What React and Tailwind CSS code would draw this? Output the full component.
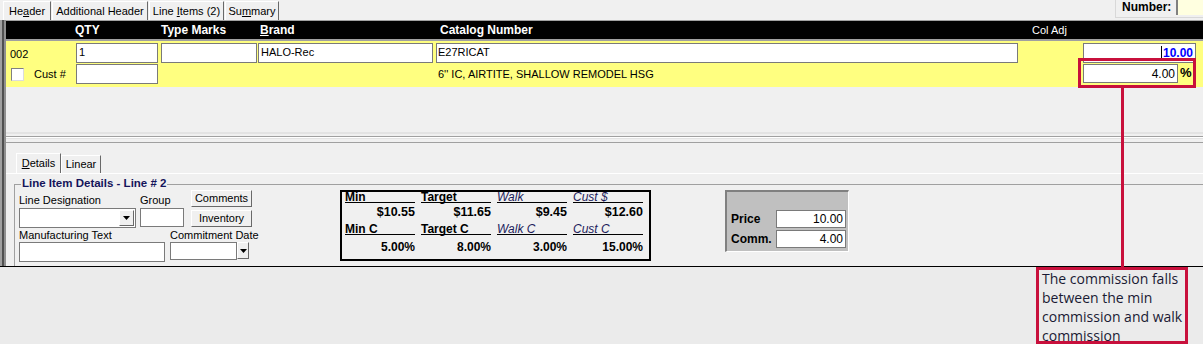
import React from "react";

function TopTab({ w, children }) {
  return (
    <div
      className={`${w} h-[19px] border-t border-l border-white border-r border-r-[#696969] text-[11px] leading-[18px] text-black text-center`}
    >
      {children}
    </div>
  );
}

function Arrow() {
  return (
    <svg width="7" height="4" viewBox="0 0 7 4">
      <path d="M0 0h7L3.5 4z" fill="#000" />
    </svg>
  );
}

function DropBtn({ cls }) {
  return (
    <div
      className={`${cls} shrink-0 flex items-center justify-center bg-[#f0f0f0] border-t border-l border-white border-r border-b border-r-[#696969] border-b-[#696969]`}
    >
      <Arrow />
    </div>
  );
}

function Btn({ children }) {
  return (
    <div className="h-[17px] w-[61px] flex items-center justify-center bg-[#f0f0f0] border-t border-l border-white border-r border-b border-r-[#696969] border-b-[#696969] text-[11px] leading-none">
      {children}
    </div>
  );
}

function StatHead({ children, italic }) {
  return (
    <div
      className={`h-[11px] leading-[10px] border-b border-black text-[12px] ${
        italic ? "italic font-normal text-[#1c1c5c]" : "font-bold text-black"
      }`}
    >
      {children}
    </div>
  );
}

export default function App() {
  const inp = "bg-white border border-[#7a7a7a]";
  return (
    <div className="relative w-[1203px] h-[344px] overflow-hidden bg-[#ebebeb] font-['Liberation_Sans',Arial,sans-serif] text-black">
      {/* top tabs */}
      <div className="h-[20px] bg-[#f0f0f0] flex items-start">
        <div className="flex pl-[3px] pt-[1px] gap-[1px]">
          <TopTab w="w-[48px]">
            He<u>a</u>der
          </TopTab>
          <TopTab w="w-[96px]">Additional Header</TopTab>
          <TopTab w="w-[75px]">
            Line <u>I</u>tems (2)
          </TopTab>
          <TopTab w="w-[54px]">
            Su<u>m</u>mary
          </TopTab>
        </div>
        <div className="ml-auto w-[88px] h-[18px] flex items-start border-l border-b border-l-[#d8d8d8] border-b-[#d8d8d8]">
          <div className="pl-[6px] w-[60px] text-[12px] font-bold leading-[14px]">Number:</div>
          <div className="flex-1 h-[15px] bg-[#ffffe0] border-l-2 border-l-[#808080]"></div>
        </div>
      </div>

      {/* main window */}
      <div className="h-[247px] flex border-b border-black">
        <div className="w-[6px] flex">
          <div className="w-[2px] bg-[#a0a0a0]"></div>
          <div className="w-[2px] bg-[#505050]"></div>
          <div className="w-[2px] bg-[#909090]"></div>
        </div>
        <div className="flex-1 flex flex-col bg-[#f0f0f0]">
          <div className="h-[1px] bg-[#a0a0a0]"></div>
          {/* black header */}
          <div className="h-[18px] bg-black flex items-center text-white text-[12px] leading-none font-bold">
            <div className="w-[69px]"></div>
            <div className="w-[82px]">QTY</div>
            <div className="w-[96px] ml-[4px]">Type Marks</div>
            <div className="w-[175px] ml-[1px] pl-[2px]">
              <u>B</u>rand
            </div>
            <div className="w-[582px] ml-[3px] pl-[4px]">Catalog Number</div>
            <div className="ml-[14px] font-normal text-[11px]">Col Adj</div>
          </div>
          <div className="h-[2px] bg-[#a0a0a0]"></div>
          {/* yellow rows */}
          <div className="bg-[#ffff80] pt-[2px] pb-[3px] flex flex-col gap-[1px]">
            <div className="flex h-[20px] text-[11px]">
              <div className="w-[70px] pl-[4px] flex items-center pt-[3px]">002</div>
              <div className={`${inp} w-[82px] pl-[2px] leading-[17px]`}>1</div>
              <div className={`${inp} w-[96px] ml-[3px]`}></div>
              <div className={`${inp} w-[175px] ml-[1px] pl-[2px] leading-[17px]`}>HALO-Rec</div>
              <div className={`${inp} w-[582px] ml-[3px] pl-[1px] leading-[17px]`}>E27RICAT</div>
              <div className="flex-1"></div>
              <div className={`${inp} w-[113px] mr-[7px] flex items-center justify-end pr-[2px] text-[12px] font-bold text-[#0000ff]`}>
                <span className="w-[1px] h-[14px] bg-black mr-[1px]"></span>10.00
              </div>
            </div>
            <div className="flex h-[20px] text-[11px]">
              <div className="w-[70px] shrink-0 flex items-center">
                <div className="ml-[5px] w-[13px] h-[13px] bg-white border border-t-[#808080] border-l-[#808080] border-r-[#dcdcdc] border-b-[#dcdcdc]"></div>
                <div className="ml-[10px]">Cust #</div>
              </div>
              <div className={`${inp} w-[82px] shrink-0`}></div>
              <div className="ml-[280px] flex items-center whitespace-nowrap pt-[1px]">
                6'' IC, AIRTITE, SHALLOW REMODEL HSG
              </div>
              <div className="flex-1"></div>
              <div className={`${inp} w-[95px] h-[19px] shrink-0 flex items-center justify-end pr-[2px] text-[12px]`}>4.00</div>
              <div className="w-[18px] shrink-0 mr-[7px] pl-[2px] text-[13px] font-bold leading-[18px]">%</div>
            </div>
          </div>
          {/* empty grey area */}
          <div className="h-[45px]"></div>
          {/* splitter */}
          <div className="h-[11px] flex flex-col">
            <div className="h-[2px] bg-[#e3e3e3]"></div>
            <div className="h-[2px]"></div>
            <div className="h-[1px] bg-[#a0a0a0]"></div>
            <div className="h-[1px] bg-white"></div>
            <div className="h-[1px] bg-[#e3e3e3]"></div>
            <div className="h-[3px]"></div>
            <div className="h-[1px] bg-[#a0a0a0]"></div>
          </div>
          {/* bottom panel */}
          <div className="flex-1 flex flex-col overflow-hidden">
            <div className="pt-[10px] pl-[10px] flex items-end border-b border-white">
              <div className="w-[45px] h-[20px] border-t border-l border-white border-r border-r-[#696969] text-[11px] leading-[18px] text-center">
                <u>D</u>etails
              </div>
              <div className="w-[40px] h-[18px] border-t border-l border-white border-r border-r-[#696969] text-[11px] leading-[17px] text-center">
                Linear
              </div>
            </div>
            <div className="ml-[8px] mt-[10px] flex-1 border-t border-l border-[#a0a0a0] flex flex-col">
              <div className="-mt-[9px] ml-[6px] px-[1px] w-fit bg-[#f0f0f0] text-[11.5px] font-bold leading-[14px] text-[#14145a]">
                Line Item Details - Line # 2
              </div>
              <div className="flex pl-[4px] -mt-[1px]">
                {/* left form */}
                <div className="w-[233px] shrink-0 flex flex-col text-[11px]">
                  <div className="flex pt-[1px]">
                    <div className="w-[117px] shrink-0 flex flex-col">
                      <div className="h-[18px] pt-[4px] leading-[13px]">Line Designation</div>
                      <div className={`${inp} h-[20px] flex justify-end p-[1px]`}>
                        <DropBtn cls="w-[15px] h-[16px]" />
                      </div>
                    </div>
                    <div className="w-[44px] shrink-0 ml-[4px] flex flex-col">
                      <div className="h-[18px] pt-[4px] leading-[13px]">Group</div>
                      <div className={`${inp} h-[19px]`}></div>
                    </div>
                    <div className="ml-[7px] flex flex-col gap-[3px]">
                      <Btn>Comments</Btn>
                      <Btn>Inventory</Btn>
                    </div>
                  </div>
                  <div className="flex">
                    <div className="w-[146px] shrink-0 flex flex-col">
                      <div className="h-[14px] pt-[1px] leading-[13px]">Manufacturing Text</div>
                      <div className={`${inp} h-[20px]`}></div>
                    </div>
                    <div className="ml-[5px] w-[82px] shrink-0 flex flex-col">
                      <div className="h-[14px] pt-[1px] leading-[13px] whitespace-nowrap">Commitment Date</div>
                      <div className="flex items-start">
                        <div className={`${inp} w-[67px] h-[18px] shrink-0`}></div>
                        <DropBtn cls="w-[12px] h-[17px]" />
                      </div>
                    </div>
                  </div>
                </div>
                {/* stats box */}
                <div className="ml-[88px] mt-[1px] w-[311px] h-[71px] shrink-0 border-2 border-black pl-[3px] grid grid-cols-[70px_70px_70px_70px] gap-x-[6px] content-start">
                  <StatHead>Min</StatHead>
                  <StatHead>Target</StatHead>
                  <StatHead italic>Walk</StatHead>
                  <StatHead italic>Cust $</StatHead>
                  <div className="h-[21px] leading-[19px] text-right font-bold text-[12.5px]">$10.55</div>
                  <div className="h-[21px] leading-[19px] text-right font-bold text-[12.5px]">$11.65</div>
                  <div className="h-[21px] leading-[19px] text-right font-bold text-[12.5px]">$9.45</div>
                  <div className="h-[21px] leading-[19px] text-right font-bold text-[12.5px]">$12.60</div>
                  <StatHead>Min C</StatHead>
                  <StatHead>Target C</StatHead>
                  <StatHead italic>Walk C</StatHead>
                  <StatHead italic>Cust C</StatHead>
                  <div className="h-[24px] leading-[24px] text-right font-bold text-[12px]">5.00%</div>
                  <div className="h-[24px] leading-[24px] text-right font-bold text-[12px]">8.00%</div>
                  <div className="h-[24px] leading-[24px] text-right font-bold text-[12px]">3.00%</div>
                  <div className="h-[24px] leading-[24px] text-right font-bold text-[12px]">15.00%</div>
                </div>
                {/* price box */}
                <div className="ml-[74px] mt-[1px] w-[124px] h-[62px] shrink-0 bg-[#c0c0c0] border-t-2 border-l-2 border-[#808080] border-r border-b border-r-white border-b-white pt-[18px] flex flex-col gap-[2px]">
                  <div className="flex items-center h-[18px]">
                    <div className="w-[49px] pl-[4px] text-[12px] font-bold">Price</div>
                    <div className={`${inp} w-[70px] h-[18px] text-right pr-[2px] text-[12px] leading-[16px]`}>10.00</div>
                  </div>
                  <div className="flex items-center h-[18px]">
                    <div className="w-[49px] pl-[4px] text-[12px] font-bold">Comm.</div>
                    <div className={`${inp} w-[70px] h-[18px] text-right pr-[2px] text-[12px] leading-[16px]`}>4.00</div>
                  </div>
                </div>
              </div>
            </div>
          </div>
        </div>
      </div>

      {/* annotation overlays */}
      <div className="absolute left-[1078px] top-[58px] w-[118px] h-[30px] border-[3px] border-[#c8103c]"></div>
      <div className="absolute left-[1121px] top-[87px] w-[3px] h-[181px] bg-[#c8103c]"></div>
      <div className="absolute left-[1036px] top-[267px] w-[152px] h-[77px] border-[3px] border-[#c8103c] bg-[#ebebeb] overflow-hidden pl-[3px] pr-[2px] -pt-[1px] font-['Open_Sans',sans-serif] text-[14px] leading-[19px] text-[#1a1a33]">
        <div className="-mt-[1px] whitespace-nowrap">
          The commission falls
          <br />
          between the min
          <br />
          commission and walk
          <br />
          commission
        </div>
      </div>
    </div>
  );
}
